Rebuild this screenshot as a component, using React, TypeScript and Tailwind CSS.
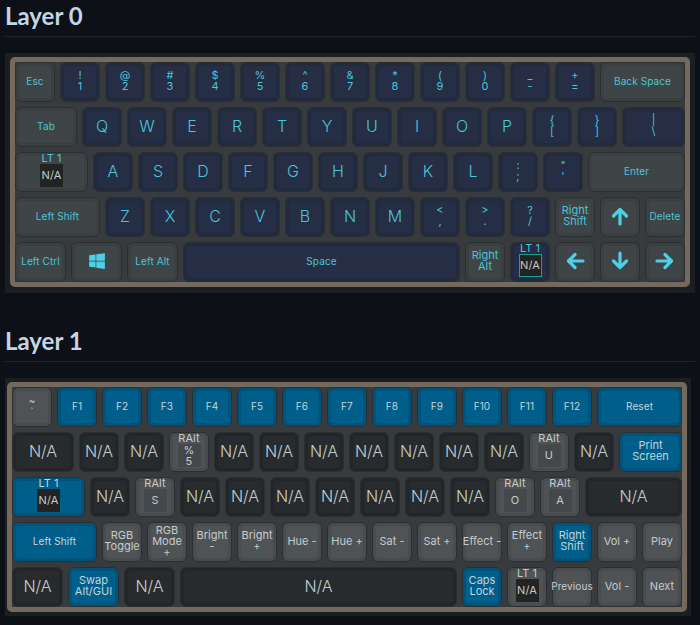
import { FaWindows } from 'react-icons/fa'
import { ReactNode } from 'react'

type Variant = 'navy' | 'grey' | 'blue' | 'none' | 'fn'
type KeyDef = {
  text?: string
  lines?: string[]
  size?: 'lg' | 'sm' | 'md'
  w?: string
  v: Variant
  icon?: ReactNode
  tap?: string[]
  tapLabel?: string
}

const W1 = 'w-[40px]'
const W125 = 'w-[51px]'
const W15 = 'w-[62px]'
const W15R = 'w-[63px]'
const W175 = 'w-[73px]'
const W2 = 'w-[85px]'
const W225 = 'w-[97px]'
const W625 = 'w-[277px]'

const skins: Record<Variant, { key: string; face: string; text: string }> = {
  navy: { key: 'bg-[#222b3e]', face: 'bg-[#252e44]', text: 'text-[#48c6da]' },
  grey: { key: 'bg-[#3a3f41]', face: 'bg-[#3f4446]', text: 'text-[#48c6da]' },
  blue: { key: 'bg-[#00547c]', face: 'bg-[#005f8a]', text: 'text-[#c3d3da]' },
  none: { key: 'bg-[#232628]', face: 'bg-[#282b2d]', text: 'text-[#c5cbcd]' },
  fn: { key: 'bg-[#484c4f]', face: 'bg-[#4f5356]', text: 'text-[#c5cbcd]' },
}

function Arrow({ dir }: { dir: 'up' | 'down' | 'left' | 'right' }) {
  const rot = dir === 'up' ? 'rotate-0' : dir === 'right' ? 'rotate-90' : dir === 'down' ? 'rotate-180' : '-rotate-90'
  return (
    <svg viewBox="0 0 20 20" className={`h-5 w-5 ${rot}`} fill="none" stroke="#4dd0e6" strokeWidth="3.2" strokeLinejoin="round" strokeLinecap="round">
      <path d="M10 18V3.5M3.5 10L10 3.5l6.5 6.5" />
    </svg>
  )
}

function Key({ k }: { k: KeyDef }) {
  const skin = skins[k.v]
  const textSize = k.size === 'lg' ? 'text-[16px] leading-5 font-light' : k.size === 'md' ? 'text-[11px] leading-[11px]' : 'text-[10px] leading-[11px] tracking-[0.1px]'
  return (
    <div className={`flex h-10 shrink-0 rounded-md border border-[#2c2f32] p-[3px] ${k.w ?? W1} ${skin.key}`}>
      <div className={`relative flex min-w-0 flex-1 flex-col items-center justify-center whitespace-nowrap rounded-[3px] pb-[2px] text-center ${skin.face} ${skin.text} ${textSize}`}>
        {k.icon}
        {k.text}
        {k.lines?.map((l, i) => <span key={i} className="block">{l}</span>)}
        {k.tap && (
          <div className="flex flex-col items-center pt-[9px]">
            <span className="absolute -top-[4px] text-[11px] leading-[13px]">{k.tapLabel}</span>
            <span className={`flex h-[23px] w-[23px] flex-col items-center justify-center text-[11px] leading-[11px] ${k.v === 'fn' && k.tapLabel === 'RAlt' ? 'bg-[#44484b]' : 'bg-[#232323]'} ${k.v === 'navy' ? 'border border-[#14a08f] text-[#d0c7b8]' : 'text-[#c5cbcd]'}`}>
              {k.tap.map((l, i) => <span key={i}>{l}</span>)}
            </span>
          </div>
        )}
      </div>
    </div>
  )
}

const n = (text: string): KeyDef => ({ text, v: 'navy', size: 'lg' })
const two = (a: string, b: string): KeyDef => ({ lines: [a, b], v: 'navy', size: 'md' })
const g = (text: string, w?: string): KeyDef => ({ text, v: 'grey', w })
const arrow = (dir: 'up' | 'down' | 'left' | 'right'): KeyDef => ({ v: 'grey', icon: <Arrow dir={dir} /> })

const layer0: KeyDef[][] = [
  [g('Esc'), two('!', '1'), two('@', '2'), two('#', '3'), two('$', '4'), two('%', '5'), two('^', '6'), two('&', '7'), two('*', '8'), two('(', '9'), two(')', '0'), two('_', '-'), two('+', '='), g('Back Space', W2)],
  [g('Tab', W15), n('Q'), n('W'), n('E'), n('R'), n('T'), n('Y'), n('U'), n('I'), n('O'), n('P'), two('{', '['), two('}', ']'), { ...two('|', '\\'), w: W15R }],
  [{ v: 'grey', w: W175, tap: ['N/A'], tapLabel: 'LT 1' }, n('A'), n('S'), n('D'), n('F'), n('G'), n('H'), n('J'), n('K'), n('L'), two(':', ';'), two('"', "'"), g('Enter', W225)],
  [g('Left Shift', W2), n('Z'), n('X'), n('C'), n('V'), n('B'), n('N'), n('M'), two('<', ','), two('>', '.'), two('?', '/'), { lines: ['Right', 'Shift'], v: 'grey', size: 'md' }, arrow('up'), g('Delete')],
  [g('Left Ctrl', W125), { v: 'grey', w: W125, icon: <FaWindows className="h-[18px] w-[18px] text-[#4dd0e6]" /> }, g('Left Alt', W125), { text: 'Space', v: 'navy', w: W625 }, { lines: ['Right', 'Alt'], v: 'grey', size: 'md' }, { v: 'navy', tap: ['N/A'], tapLabel: 'LT 1' }, arrow('left'), arrow('down'), arrow('right')],
]

const na = (w?: string): KeyDef => ({ text: 'N/A', v: 'none', size: 'lg', w })
const b = (text: string, w?: string): KeyDef => ({ text, v: 'blue', w })
const f = (...lines: string[]): KeyDef => ({ lines, v: 'fn', size: 'md' })
const ralt = (...tap: string[]): KeyDef => ({ v: 'fn', tap, tapLabel: 'RAlt' })

const layer1: KeyDef[][] = [
  [{ lines: ['~', '`'], v: 'fn' }, b('F1'), b('F2'), b('F3'), b('F4'), b('F5'), b('F6'), b('F7'), b('F8'), b('F9'), b('F10'), b('F11'), b('F12'), b('Reset', W2)],
  [na(W15), na(), na(), ralt('%', '5'), na(), na(), na(), na(), na(), na(), na(), ralt('U'), na(), { lines: ['Print', 'Screen'], v: 'blue', w: W15R, size: 'md' }],
  [{ v: 'blue', w: W175, tap: ['N/A'], tapLabel: 'LT 1' }, na(), ralt('S'), na(), na(), na(), na(), na(), na(), na(), ralt('O'), ralt('A'), na(W225)],
  [b('Left Shift', W2), f('RGB', 'Toggle'), f('RGB', 'Mode', '+'), f('Bright', '-'), f('Bright', '+'), f('Hue -'), f('Hue +'), f('Sat -'), f('Sat +'), f('Effect -'), f('Effect', '+'), { lines: ['Right', 'Shift'], v: 'blue', size: 'md' }, f('Vol +'), f('Play')],
  [na(W125), { lines: ['Swap', 'Alt/GUI'], v: 'blue', w: W125, size: 'md' }, na(W125), na(W625), { lines: ['Caps', 'Lock'], v: 'blue', size: 'md' }, { v: 'fn', tap: ['N/A'], tapLabel: 'LT 1' }, { text: 'Previous', v: 'fn' }, f('Vol -'), f('Next')],
]

function Board({ rows }: { rows: KeyDef[][] }) {
  return (
    <div className="flex w-fit flex-col gap-[5px] rounded-[5px] border-[5px] border-[#736a5d] bg-[#383b3d]">
      {rows.map((row, i) => (
        <div key={i} className="flex gap-[5px]">
          {row.map((k, j) => <Key key={j} k={k} />)}
        </div>
      ))}
    </div>
  )
}

function Heading({ children }: { children: ReactNode }) {
  return (
    <h2 className="h-[37px] border-b border-[#22262b] font-['Lato',sans-serif] text-[24px] font-bold leading-[32px] text-[#c4d6e4]">
      {children}
    </h2>
  )
}

export default function App() {
  return (
    <div className="min-h-screen overflow-hidden bg-[#0d1017] px-[5px] font-['Inter',sans-serif]">
      <Heading>Layer 0</Heading>
      <div className="mt-4 bg-[#1c1f21] pb-[6px] pl-[5px] pr-[5px] pt-1">
        <Board rows={layer0} />
      </div>
      <div className="mt-8">
        <Heading>Layer 1</Heading>
      </div>
      <div className="mt-4 w-[686px] bg-[#1c1f21] py-1 pl-[2px]">
        <Board rows={layer1} />
      </div>
    </div>
  )
}
